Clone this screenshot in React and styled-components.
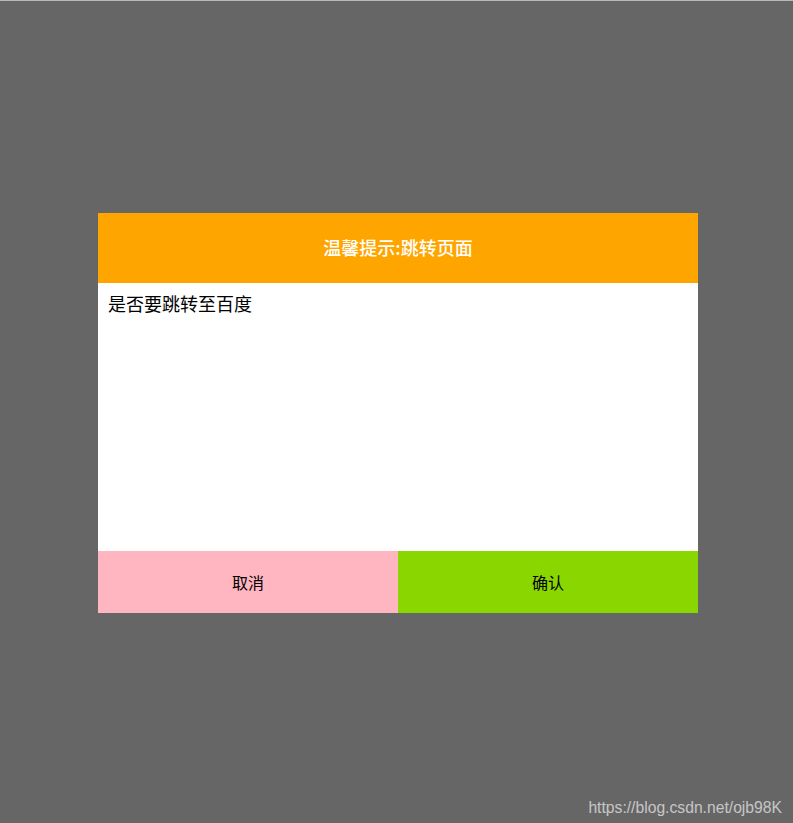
import React from "react";
import styled, { createGlobalStyle } from "styled-components";

const GlobalStyle = createGlobalStyle`
  html, body {
    margin: 0;
    padding: 0;
    background: #666666;
  }
  body {
    font-family: "Noto Sans CJK SC", "Liberation Sans", sans-serif;
  }
`;

const Page = styled.div`
  position: relative;
  box-sizing: border-box;
  height: 823px;
  padding: 1px 0 0 3px;
  border-top: 1px solid #b9b9b9;
  display: flex;
  align-items: center;
  justify-content: center;
`;

const Dialog = styled.div`
  width: 600px;
  height: 400px;
  display: flex;
  flex-direction: column;
  background: #ffffff;
`;

const Header = styled.div`
  height: 70px;
  flex-shrink: 0;
  display: flex;
  align-items: center;
  justify-content: center;
  padding-bottom: 2px;
  box-sizing: border-box;
  background: #ffa500;
  color: #ffffff;
  font-size: 18px;
  font-weight: 500;
`;

const Body = styled.div`
  flex: 1;
  padding: 7px 10px;
  color: #000000;
  font-size: 18px;
  line-height: 26px;
`;

const Footer = styled.div`
  height: 62px;
  flex-shrink: 0;
  display: flex;
`;

const Button = styled.button`
  flex: 1;
  border: none;
  margin: 0;
  padding: 0;
  background: ${(p) => p.$bg};
  color: #000000;
  font-family: "Noto Sans CJK SC", "Liberation Sans", sans-serif;
  font-size: 16px;
  cursor: pointer;
`;

const Watermark = styled.div`
  position: absolute;
  right: 11px;
  bottom: 6px;
  color: rgba(230, 230, 230, 0.75);
  font-family: "Liberation Sans", Arial, sans-serif;
  font-size: 15.7px;
`;

export default function App() {
  return (
    <>
      <GlobalStyle />
      <Page>
        <Dialog>
          <Header>温馨提示:跳转页面</Header>
          <Body>是否要跳转至百度</Body>
          <Footer>
            <Button $bg="#ffb6c1">取消</Button>
            <Button $bg="#8ad600">确认</Button>
          </Footer>
        </Dialog>
        <Watermark>https://blog.csdn.net/ojb98K</Watermark>
      </Page>
    </>
  );
}
